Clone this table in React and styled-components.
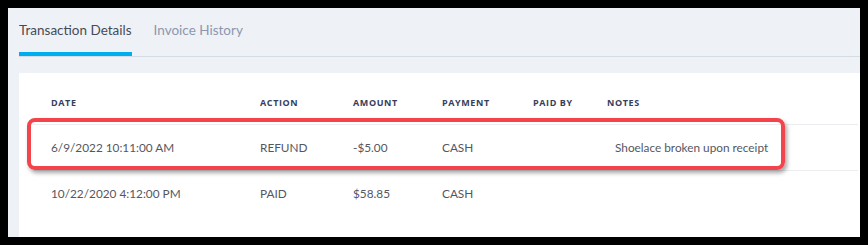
import React from 'react';
import styled, { createGlobalStyle } from 'styled-components';

const Global = createGlobalStyle`
  html, body {
    margin: 0;
    padding: 0;
    background: #000;
  }
  body {
    font-family: Lato, "Open Sans", sans-serif;
  }
`;

const Frame = styled.div`
  padding: 8px;
  height: 245px;
  box-sizing: border-box;
`;

const Panel = styled.div`
  background: #eef2f7;
  height: 229px;
  padding-left: 11px;
  overflow: hidden;
  display: flex;
  flex-direction: column;
`;

const TabBar = styled.div`
  display: flex;
  gap: 22px;
  height: 48px;
  border-bottom: 1px solid #d6dce3;
  flex-shrink: 0;
`;

const Tab = styled.div`
  box-sizing: border-box;
  padding-top: 12px;
  height: 48px;
  font-size: 13.5px;
  line-height: 20px;
  color: ${p => (p.$active ? '#474a55' : '#8d96ad')};
  border-bottom: 4px solid ${p => (p.$active ? '#00aeef' : 'transparent')};
`;

const Card = styled.div`
  position: relative;
  margin-top: 16px;
  background: #fff;
  flex: 1;
`;

const Table = styled.div`
  margin-left: 14px;
  margin-right: 2px;
`;

const Row = styled.div`
  display: grid;
  grid-template-columns: 18px 209px 93px 89px 91px 74px 1fr;
  align-items: center;
  height: ${p => (p.$head ? '51px' : '46px')};
  border-top: ${p => (p.$head ? 'none' : '1px solid #ebedf0')};
  box-sizing: border-box;
  padding-top: ${p => (p.$head ? '8px' : '0')};
`;

const HeadCell = styled.div`
  font-family: "Open Sans", sans-serif;
  font-size: 9px;
  font-weight: 700;
  letter-spacing: 0.6px;
  color: #36405a;
`;

const Cell = styled.div`
  font-size: 11.8px;
  color: #55575f;
  padding-left: ${p => (p.$note ? '8px' : '0')};
  white-space: nowrap;
`;

const Highlight = styled.div`
  position: absolute;
  left: 8px;
  top: 45px;
  width: 758px;
  height: 52px;
  box-sizing: border-box;
  border: 4px solid #f2444a;
  border-radius: 8px;
  box-shadow: 2px 3px 4px rgba(0, 0, 0, 0.35);
  pointer-events: none;
`;

const headers = ['DATE', 'ACTION', 'AMOUNT', 'PAYMENT', 'PAID BY', 'NOTES'];

const rows = [
  { date: '6/9/2022 10:11:00 AM', action: 'REFUND', amount: '-$5.00', payment: 'CASH', paidBy: '', notes: 'Shoelace broken upon receipt' },
  { date: '10/22/2020 4:12:00 PM', action: 'PAID', amount: '$58.85', payment: 'CASH', paidBy: '', notes: '' },
];

export default function App() {
  return (
    <>
      <Global />
      <Frame>
        <Panel>
          <TabBar>
            <Tab $active>Transaction Details</Tab>
            <Tab>Invoice History</Tab>
          </TabBar>
          <Card>
            <Table>
              <Row $head>
                <span />
                {headers.map(h => <HeadCell key={h}>{h}</HeadCell>)}
              </Row>
              {rows.map(r => (
                <Row key={r.date}>
                  <span />
                  <Cell>{r.date}</Cell>
                  <Cell>{r.action}</Cell>
                  <Cell>{r.amount}</Cell>
                  <Cell>{r.payment}</Cell>
                  <Cell>{r.paidBy}</Cell>
                  <Cell $note>{r.notes}</Cell>
                </Row>
              ))}
            </Table>
            <Highlight />
          </Card>
        </Panel>
      </Frame>
    </>
  );
}
